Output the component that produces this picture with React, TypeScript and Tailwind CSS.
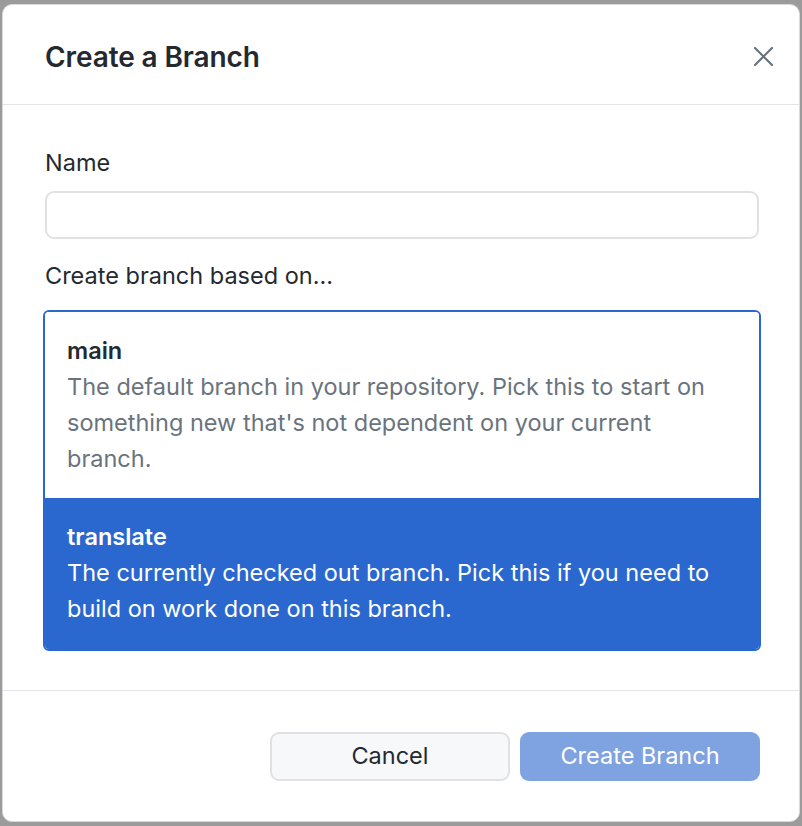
const font = { fontFamily: 'Inter, "Noto Sans", sans-serif' };

const branches = [
  {
    name: 'main',
    desc: "The default branch in your repository. Pick this to start on something new that's not dependent on your current branch.",
  },
  {
    name: 'translate',
    desc: 'The currently checked out branch. Pick this if you need to build on work done on this branch.',
  },
];

export default function App() {
  const selected = 'translate';

  return (
    <div
      className="w-[802px] h-[826px] bg-[#9b9b9b] pt-[4px] px-[2px] pb-[4px]"
      style={font}
    >
      <div className="h-full bg-white rounded-[10px] border border-[#d9d9dc] flex flex-col text-[#24292f]">
        {/* HEADER */}
        <div className="h-[100px] shrink-0 flex items-center justify-between pt-[4px] pl-[42px] pr-[25px] border-b border-[#e3e3e8]">
          <h1 className="text-[28px] font-semibold tracking-[-0.1px]">Create a Branch</h1>
          <button className="text-[#6a737d]">
            <svg width="21" height="21" viewBox="0 0 21 21" fill="none" stroke="currentColor" strokeWidth="2.2" strokeLinecap="round">
              <path d="M2 2 L19 19 M19 2 L2 19" />
            </svg>
          </button>
        </div>

        {/* BODY */}
        <div className="flex-1 pl-[42px] pr-[40px] pt-[43px]">
          <label className="block text-[23.5px] leading-[30px]">Name</label>
          <input className="mt-[13px] w-full h-[48px] rounded-[9px] border-2 border-[#e1e1e4] outline-none px-3 text-[22px]" />

          <p className="mt-[22px] text-[23.5px] leading-[30px]">Create branch based on...</p>

          <div className="mt-[19px] -mx-[2px] border-2 border-[#2a68cf] rounded-[6px] overflow-hidden">
            {branches.map((b) => {
              const active = b.name === selected;
              return (
                <div
                  key={b.name}
                  className={
                    active
                      ? 'bg-[#2a68cf] text-white px-[22px] pt-[21px] pb-[22px]'
                      : 'bg-white px-[22px] py-[21px]'
                  }
                >
                  <div className="text-[23.5px] font-semibold leading-[36px]">{b.name}</div>
                  <p
                    className={
                      active
                        ? 'text-[23.5px] leading-[36px] text-white'
                        : 'text-[23.5px] leading-[36px] text-[#6a737d]'
                    }
                  >
                    {b.desc}
                  </p>
                </div>
              );
            })}
          </div>
        </div>

        {/* FOOTER */}
        <div className="h-[131px] shrink-0 border-t border-[#e3e3e8] flex items-center justify-end gap-[10px] pr-[39px]">
          <button className="w-[240px] h-[49px] rounded-[9px] border-2 border-[#e1e1e4] bg-[#f7f8fa] text-[23.5px]">
            Cancel
          </button>
          <button className="w-[240px] h-[49px] rounded-[9px] bg-[#7fa3e1] text-white text-[23.5px]">
            Create Branch
          </button>
        </div>
      </div>
    </div>
  );
}
